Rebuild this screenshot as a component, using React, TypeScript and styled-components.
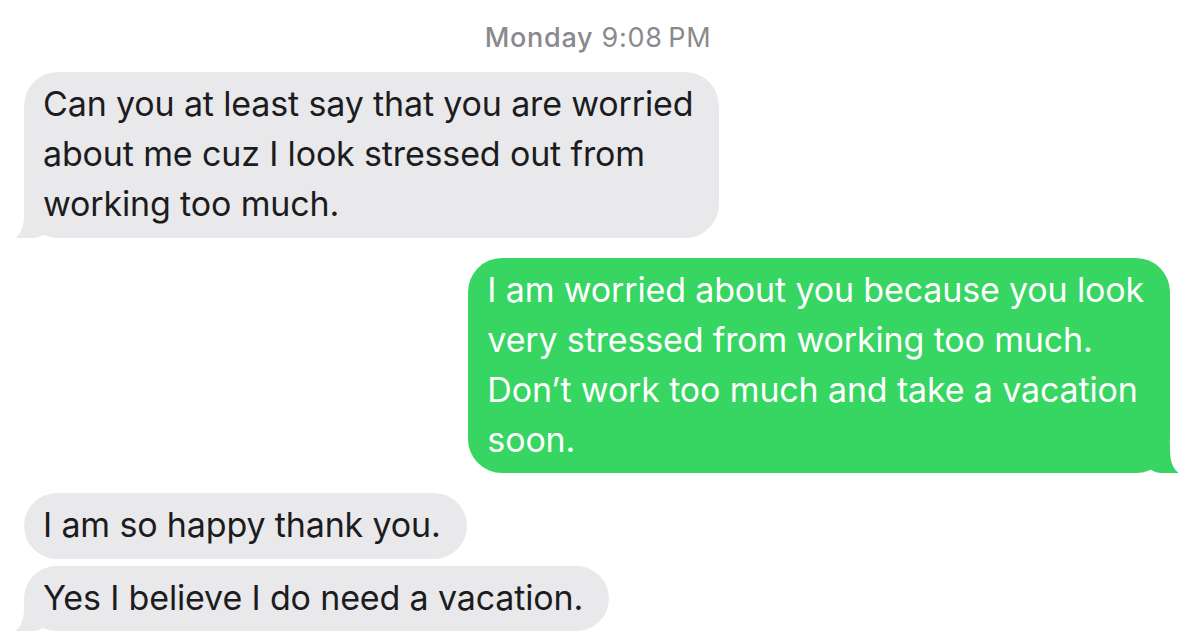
import React from "react";
import styled, { createGlobalStyle, css } from "styled-components";

const Global = createGlobalStyle`
  html, body { margin: 0; padding: 0; background: #ffffff; }
  body { font-family: Inter, "Noto Sans", "Liberation Sans", sans-serif; -webkit-font-smoothing: antialiased; }
`;

const Thread = styled.div`
  width: 1202px;
  height: 642px;
  box-sizing: border-box;
  padding: 22px 22px 0 24px;
  display: flex;
  flex-direction: column;
  overflow: hidden;
`;

const Stamp = styled.div`
  align-self: center;
  margin-right: 8px;
  font-size: 27px;
  line-height: 32px;
  color: #8a8a8e;
  letter-spacing: 0.7px;
  margin-bottom: 18px;
  b { font-weight: 500; }
`;

const Row = styled.div<{ $me?: boolean; $gap: number }>`
  display: flex;
  justify-content: ${(p) => (p.$me ? "flex-end" : "flex-start")};
  margin-top: ${(p) => p.$gap}px;
  padding-right: ${(p) => (p.$me ? "10px" : "0")};
`;

const Bubble = styled.div<{ $me?: boolean; $tail?: boolean }>`
  position: relative;
  z-index: 0;
  box-sizing: border-box;
  max-width: 720px;
  padding: 7px 26px 8.5px 19px;
  border-radius: 34px;
  font-size: 34px;
  line-height: 50px;
  letter-spacing: -0.15px;
  background: ${(p) => (p.$me ? "#37d562" : "#e9e9eb")};
  color: ${(p) => (p.$me ? "#ffffff" : "#1c1c1e")};
  &::before,
  &::after {
    content: "";
    position: absolute;
    bottom: 0;
    z-index: -1;
    display: ${(p) => (p.$tail ? "block" : "none")};
  }
  ${(p) =>
    p.$me
      ? css`
          &::before {
            right: -8px;
            width: 32px;
            height: 30px;
            background: #37d562;
            border-bottom-left-radius: 16px 12px;
          }
          &::after {
            right: -30px;
            width: 30px;
            height: 30px;
            background: #ffffff;
            border-bottom-left-radius: 11px 22px;
          }
        `
      : css`
          &::before {
            left: -8px;
            width: 32px;
            height: 30px;
            background: #e9e9eb;
            border-bottom-right-radius: 16px 12px;
          }
          &::after {
            left: -30px;
            width: 30px;
            height: 30px;
            background: #ffffff;
            border-bottom-right-radius: 11px 22px;
          }
        `}
`;

export default function App() {
  return (
    <>
      <Global />
      <Thread>
        <Stamp>
          <b>Monday</b> 9:08&#8201;PM
        </Stamp>
        <Row $gap={0}>
          <Bubble $tail>
            Can you at least say that you are worried
            <br />
            about me cuz I look stressed out from
            <br />
            working too much.
          </Bubble>
        </Row>
        <Row $me $gap={20}>
          <Bubble $me $tail>
            I am worried about you because you look
            <br />
            very stressed from working too much.
            <br />
            Don’t work too much and take a vacation
            <br />
            soon.
          </Bubble>
        </Row>
        <Row $gap={20}>
          <Bubble>I am so happy thank you.</Bubble>
        </Row>
        <Row $gap={7}>
          <Bubble $tail>Yes I believe I do need a vacation.</Bubble>
        </Row>
      </Thread>
    </>
  );
}
